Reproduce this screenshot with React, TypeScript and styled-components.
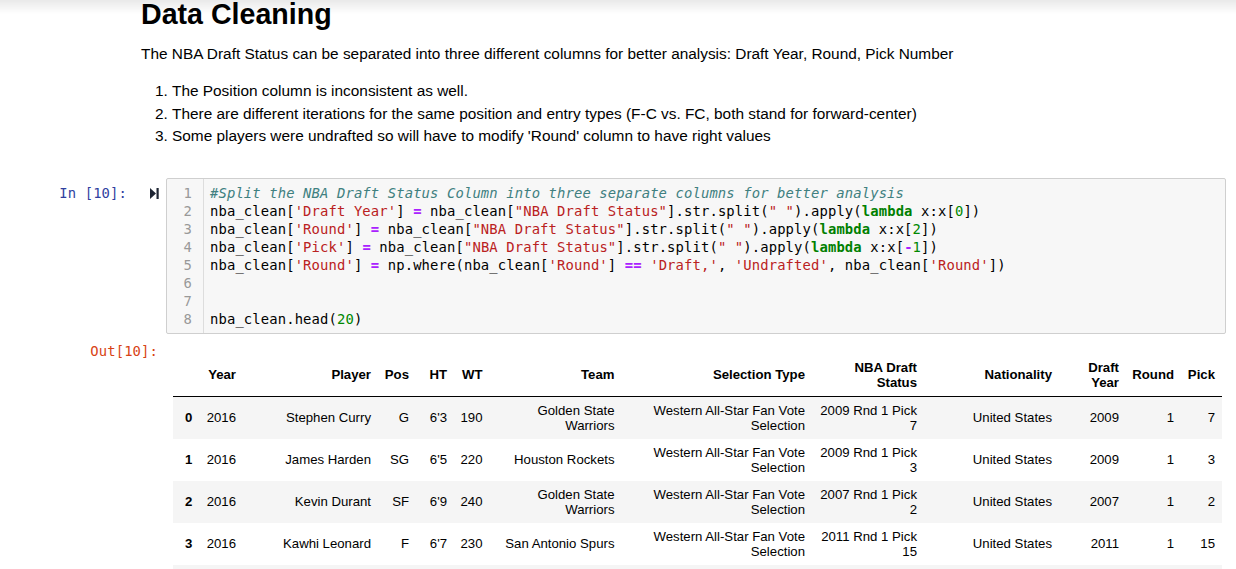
import React from "react";
import styled, { createGlobalStyle } from "styled-components";

const GlobalStyle = createGlobalStyle`
  html, body {
    margin: 0;
    padding: 0;
    background: #ffffff;
  }
  body {
    font-family: "Liberation Sans", Arial, Helvetica, sans-serif;
    color: #000;
  }
`;

const TopShadow = styled.div`
  position: fixed;
  top: 0;
  left: 0;
  right: 0;
  height: 14px;
  background: linear-gradient(to bottom, rgba(0, 0, 0, 0.085), rgba(0, 0, 0, 0));
  pointer-events: none;
  z-index: 5;
`;

const Notebook = styled.div`
  width: 1236px;
  display: flex;
  flex-direction: column;
`;

const MarkdownCell = styled.div`
  padding-left: 141px;
  display: flex;
  flex-direction: column;
`;

const Heading = styled.h1`
  margin: 0;
  font-size: 28.6px;
  line-height: 28.6px;
  font-weight: bold;
`;

const Paragraph = styled.p`
  margin: 14.4px 0 0;
  font-size: 15.4px;
  line-height: 22px;
`;

const List = styled.ol`
  margin: 15px 0 0;
  padding-left: 31px;
  font-size: 15.4px;
  line-height: 22.6px;
`;

const InputRow = styled.div`
  display: flex;
  align-items: flex-start;
  margin-top: 30.2px;
`;

const mono = `
  font-family: "DejaVu Sans Mono", monospace;
  font-size: 13.86px;
  letter-spacing: 0.12px;
  line-height: 18px;
`;

const PromptIn = styled.div`
  width: 127px;
  padding-top: 6px;
  text-align: right;
  ${mono}
  color: #303f9f;
  white-space: pre;
`;

const RunButton = styled.div`
  width: 9px;
  height: 11px;
  margin: 10px 7px 0 23px;
  display: flex;
`;

const CodeBox = styled.div`
  width: 1060px;
  box-sizing: border-box;
  display: flex;
  border: 1px solid #cfcfcf;
  border-radius: 2px;
  background: #f7f7f7;
`;

const Gutter = styled.div`
  width: 37px;
  padding: 5px 11px 5px 0;
  box-sizing: border-box;
  border-right: 1px solid #dddddd;
  display: flex;
  flex-direction: column;
  align-items: flex-end;
  ${mono}
  color: #999999;
`;

const LineNumber = styled.div`
  height: 18px;
`;

const CodeArea = styled.div`
  flex: 1;
  padding: 5px 0 5px 6px;
  display: flex;
  flex-direction: column;
  ${mono}
  color: #000;
`;

const CodeLine = styled.div`
  height: 18px;
  white-space: pre;
`;

type Kind = "v" | "c" | "k" | "s" | "n" | "o";

const kindStyles: Record<Kind, string> = {
  v: "color: #000;",
  c: "color: #408080; font-style: italic;",
  k: "color: #008000; font-weight: bold;",
  s: "color: #ba2121;",
  n: "color: #008800;",
  o: "color: #aa22ff; font-weight: bold;",
};

const Tok = styled.span<{ $kind: Kind }>`
  ${(p) => kindStyles[p.$kind]}
`;

const OutputRow = styled.div`
  display: flex;
  align-items: flex-start;
  margin-top: 8px;
`;

const PromptOut = styled.div`
  width: 158px;
  text-align: right;
  ${mono}
  color: #d84315;
  white-space: pre;
`;

const OutputArea = styled.div`
  margin-left: 8px;
  padding: 12px 0 0 7px;
`;

const Table = styled.table`
  border-collapse: collapse;
  border-spacing: 0;
  table-layout: fixed;
  width: 1048.6px;
  font-family: "Liberation Sans", Arial, sans-serif;
  font-size: 13.2px;
  line-height: 15px;
  color: #000;
`;

const HeadRow = styled.tr`
  border-bottom: 1px solid #000;
  height: 42px;
`;

const HeadCell = styled.th`
  padding: 6px 6.6px;
  text-align: right;
  vertical-align: middle;
  font-weight: bold;
`;

const BodyRow = styled.tr<{ $striped: boolean }>`
  background: ${(p) => (p.$striped ? "#f5f5f5" : "#ffffff")};
  height: 42px;
`;

const IndexCell = styled.th`
  padding: 6px 6.6px;
  text-align: right;
  vertical-align: middle;
  font-weight: bold;
`;

const Cell = styled.td`
  padding: 6px 6.6px;
  text-align: right;
  vertical-align: middle;
`;

type T = [Kind, string];

const codeLines: T[][] = [
  [["c", "#Split the NBA Draft Status Column into three separate columns for better analysis"]],
  [
    ["v", "nba_clean["],
    ["s", "'Draft Year'"],
    ["v", "] "],
    ["o", "="],
    ["v", " nba_clean["],
    ["s", '"NBA Draft Status"'],
    ["v", "].str.split("],
    ["s", '" "'],
    ["v", ").apply("],
    ["k", "lambda"],
    ["v", " x:x["],
    ["n", "0"],
    ["v", "])"],
  ],
  [
    ["v", "nba_clean["],
    ["s", "'Round'"],
    ["v", "] "],
    ["o", "="],
    ["v", " nba_clean["],
    ["s", '"NBA Draft Status"'],
    ["v", "].str.split("],
    ["s", '" "'],
    ["v", ").apply("],
    ["k", "lambda"],
    ["v", " x:x["],
    ["n", "2"],
    ["v", "])"],
  ],
  [
    ["v", "nba_clean["],
    ["s", "'Pick'"],
    ["v", "] "],
    ["o", "="],
    ["v", " nba_clean["],
    ["s", '"NBA Draft Status"'],
    ["v", "].str.split("],
    ["s", '" "'],
    ["v", ").apply("],
    ["k", "lambda"],
    ["v", " x:x["],
    ["o", "-"],
    ["n", "1"],
    ["v", "])"],
  ],
  [
    ["v", "nba_clean["],
    ["s", "'Round'"],
    ["v", "] "],
    ["o", "="],
    ["v", " np.where(nba_clean["],
    ["s", "'Round'"],
    ["v", "] "],
    ["o", "=="],
    ["v", " "],
    ["s", "'Draft,'"],
    ["v", ", "],
    ["s", "'Undrafted'"],
    ["v", ", nba_clean["],
    ["s", "'Round'"],
    ["v", "])"],
  ],
  [],
  [],
  [
    ["v", "nba_clean.head("],
    ["n", "20"],
    ["v", ")"],
  ],
];

const colWidths = [26, 43.6, 135, 38, 38, 35.5, 132, 190.5, 112, 135, 67, 55, 41];

const headers = [
  "",
  "Year",
  "Player",
  "Pos",
  "HT",
  "WT",
  "Team",
  "Selection Type",
  "NBA Draft Status",
  "Nationality",
  "Draft Year",
  "Round",
  "Pick",
];

const rows: string[][] = [
  ["0", "2016", "Stephen Curry", "G", "6'3", "190", "Golden State Warriors", "Western All-Star Fan Vote Selection", "2009 Rnd 1 Pick 7", "United States", "2009", "1", "7"],
  ["1", "2016", "James Harden", "SG", "6'5", "220", "Houston Rockets", "Western All-Star Fan Vote Selection", "2009 Rnd 1 Pick 3", "United States", "2009", "1", "3"],
  ["2", "2016", "Kevin Durant", "SF", "6'9", "240", "Golden State Warriors", "Western All-Star Fan Vote Selection", "2007 Rnd 1 Pick 2", "United States", "2007", "1", "2"],
  ["3", "2016", "Kawhi Leonard", "F", "6'7", "230", "San Antonio Spurs", "Western All-Star Fan Vote Selection", "2011 Rnd 1 Pick 15", "United States", "2011", "1", "15"],
  ["", "", "", "", "", "", "", "", "", "", "", "", ""],
];

const RunIcon = () => (
  <svg width="9" height="11" viewBox="0 0 9 11">
    <polygon points="0,0 6,5.5 0,11" fill="#1e2533" />
    <rect x="6.5" y="0" width="2.2" height="11" fill="#1e2533" />
  </svg>
);

export default function App() {
  return (
    <>
      <GlobalStyle />
      <TopShadow />
      <Notebook>
        <MarkdownCell>
          <Heading>Data Cleaning</Heading>
          <Paragraph>
            The NBA Draft Status can be separated into three different columns for better analysis: Draft Year, Round, Pick Number
          </Paragraph>
          <List>
            <li>The Position column is inconsistent as well.</li>
            <li>There are different iterations for the same position and entry types (F-C vs. FC, both stand for forward-center)</li>
            <li>Some players were undrafted so will have to modify 'Round' column to have right values</li>
          </List>
        </MarkdownCell>

        <InputRow>
          <PromptIn>In [10]:</PromptIn>
          <RunButton>
            <RunIcon />
          </RunButton>
          <CodeBox>
            <Gutter>
              {codeLines.map((_, i) => (
                <LineNumber key={i}>{i + 1}</LineNumber>
              ))}
            </Gutter>
            <CodeArea>
              {codeLines.map((line, i) => (
                <CodeLine key={i}>
                  {line.map(([k, t], j) => (
                    <Tok key={j} $kind={k}>
                      {t}
                    </Tok>
                  ))}
                </CodeLine>
              ))}
            </CodeArea>
          </CodeBox>
        </InputRow>

        <OutputRow>
          <PromptOut>Out[10]:</PromptOut>
          <OutputArea>
            <Table>
              <colgroup>
                {colWidths.map((w, i) => (
                  <col key={i} style={{ width: `${w}px` }} />
                ))}
              </colgroup>
              <thead>
                <HeadRow>
                  {headers.map((h, i) => (
                    <HeadCell key={i}>{h}</HeadCell>
                  ))}
                </HeadRow>
              </thead>
              <tbody>
                {rows.map((r, i) => (
                  <BodyRow key={i} $striped={i % 2 === 0}>
                    <IndexCell>{r[0]}</IndexCell>
                    {r.slice(1).map((c, j) => (
                      <Cell key={j}>{c}</Cell>
                    ))}
                  </BodyRow>
                ))}
              </tbody>
            </Table>
          </OutputArea>
        </OutputRow>
      </Notebook>
    </>
  );
}
